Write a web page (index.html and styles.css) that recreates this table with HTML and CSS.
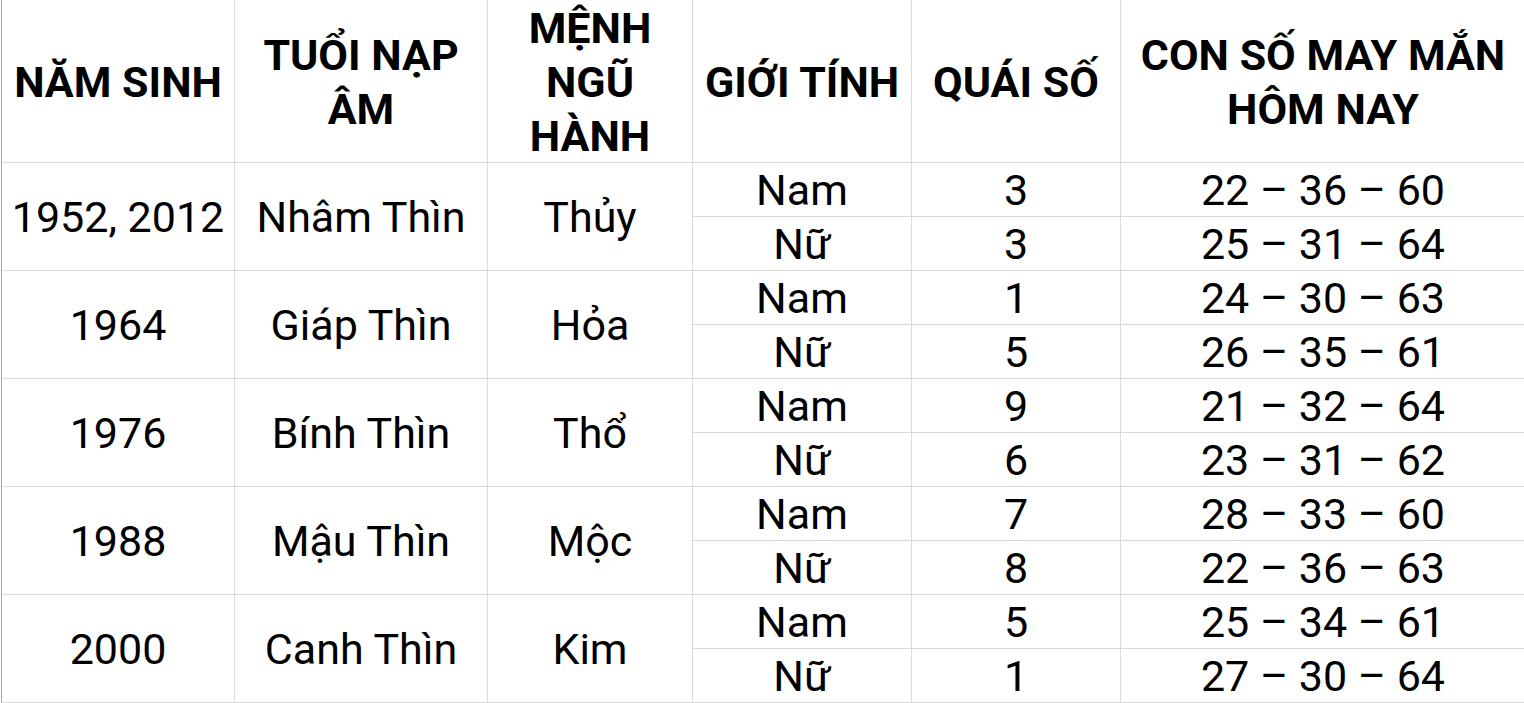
FILE: index.html
```html
<!DOCTYPE html>
<html lang="vi">
<head>
<meta charset="utf-8">
<title>Con số may mắn</title>
<link rel="stylesheet" href="styles.css">
</head>
<body>
<div class="sheet">
  <div class="cell head">NĂM SINH</div>
  <div class="cell head">TUỔI NẠP<br>ÂM</div>
  <div class="cell head">MỆNH<br>NGŨ<br>HÀNH</div>
  <div class="cell head">GIỚI TÍNH</div>
  <div class="cell head">QUÁI SỐ</div>
  <div class="cell head">CON SỐ MAY MẮN<br>HÔM NAY</div>

  <div class="cell span2">1952, 2012</div>
  <div class="cell span2">Nhâm Thìn</div>
  <div class="cell span2">Thủy</div>
  <div class="cell">Nam</div><div class="cell">3</div><div class="cell">22 – 36 – 60</div>
  <div class="cell">Nữ</div><div class="cell">3</div><div class="cell">25 – 31 – 64</div>

  <div class="cell span2">1964</div>
  <div class="cell span2">Giáp Thìn</div>
  <div class="cell span2">Hỏa</div>
  <div class="cell">Nam</div><div class="cell">1</div><div class="cell">24 – 30 – 63</div>
  <div class="cell">Nữ</div><div class="cell">5</div><div class="cell">26 – 35 – 61</div>

  <div class="cell span2">1976</div>
  <div class="cell span2">Bính Thìn</div>
  <div class="cell span2">Thổ</div>
  <div class="cell">Nam</div><div class="cell">9</div><div class="cell">21 – 32 – 64</div>
  <div class="cell">Nữ</div><div class="cell">6</div><div class="cell">23 – 31 – 62</div>

  <div class="cell span2">1988</div>
  <div class="cell span2">Mậu Thìn</div>
  <div class="cell span2">Mộc</div>
  <div class="cell">Nam</div><div class="cell">7</div><div class="cell">28 – 33 – 60</div>
  <div class="cell">Nữ</div><div class="cell">8</div><div class="cell">22 – 36 – 63</div>

  <div class="cell span2">2000</div>
  <div class="cell span2">Canh Thìn</div>
  <div class="cell span2">Kim</div>
  <div class="cell">Nam</div><div class="cell">5</div><div class="cell">25 – 34 – 61</div>
  <div class="cell">Nữ</div><div class="cell">1</div><div class="cell">27 – 30 – 64</div>
</div>
</body>
</html>
```
FILE: styles.css
```css
html, body {
  margin: 0;
  padding: 0;
  background: #ffffff;
  overflow: hidden;
}

body {
  font-family: Roboto, "Noto Sans", "Liberation Sans", sans-serif;
  color: #000000;
}

.sheet {
  margin-left: 1px;
  border-left: 1px solid #a8a8a8;
  border-bottom: 1px solid #dadada;
  display: grid;
  grid-template-columns: 232px 252px 204px 218px 208px 404px;
  grid-template-rows: 162px repeat(10, 53px);
  gap: 1px;
  background: #dadada;
  width: max-content;
}

.cell {
  background: #ffffff;
  display: flex;
  align-items: center;
  justify-content: center;
  text-align: center;
  font-size: 43px;
  line-height: 54px;
  padding-top: 1px;
  white-space: nowrap;
}

.head {
  font-weight: 700;
}

.span2 {
  grid-row: span 2;
}
```
